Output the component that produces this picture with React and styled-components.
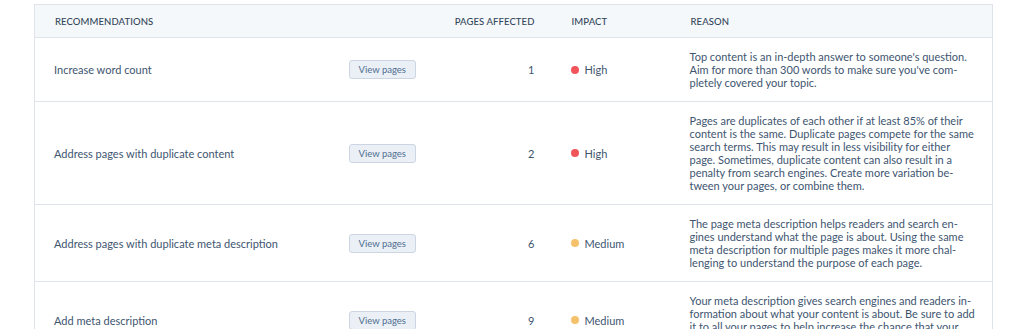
import React from 'react';
import styled, { createGlobalStyle } from 'styled-components';

const GlobalStyle = createGlobalStyle`
  body {
    margin: 0;
    background: #fff;
    font-family: Lato, "Open Sans", sans-serif;
    color: #33475b;
  }
`;

const Page = styled.div`
  padding: 4px 25px 0 34px;
`;

const Table = styled.table`
  width: 959px;
  border-collapse: collapse;
  table-layout: fixed;
  border: 1px solid #dfe3eb;
`;

const HeadCell = styled.th`
  height: 32px;
  padding: 0 ${p => (p.$right ? '17px' : '0')} 0 ${p => (p.$right ? '0' : '20px')};
  background: #f5f8fa;
  border-bottom: 1px solid #dfe3eb;
  font-size: 9.5px;
  font-weight: 500;
  text-transform: uppercase;
  text-align: ${p => (p.$right ? 'right' : 'left')};
  color: #33475b;
  letter-spacing: 0.1px;
`;

const Row = styled.tr`
  border-bottom: 1px solid #dfe3eb;
`;

const Cell = styled.td`
  padding: 12px ${p => (p.$right ? '17px' : '20px')} 12px ${p => (p.$right ? '0' : '19px')};
  vertical-align: middle;
  font-size: 11px;
  line-height: 13px;
  text-align: ${p => (p.$right ? 'right' : 'left')};
  color: #3e5570;
`;

const Reason = styled(Cell)`
  padding-right: 10px;
  white-space: nowrap;
`;

const ViewButton = styled.button`
  height: 19px;
  padding: 0 9px;
  background: #eaf0f6;
  border: 1px solid #cbd6e2;
  border-radius: 3px;
  color: #506e91;
  font-family: inherit;
  font-size: 9.5px;
  cursor: pointer;
`;

const Impact = styled.span`
  display: inline-flex;
  align-items: center;
  gap: 6px;
`;

const Dot = styled.span`
  width: 8px;
  height: 8px;
  border-radius: 50%;
  background: ${p => (p.$level === 'High' ? '#f2545b' : '#f5c26b')};
`;

const rows = [
  {
    name: 'Increase word count',
    count: 1,
    impact: 'High',
    reason: [
      "Top content is an in-depth answer to someone's question.",
      "Aim for more than 300 words to make sure you've com-",
      'pletely covered your topic.',
    ],
  },
  {
    name: 'Address pages with duplicate content',
    count: 2,
    impact: 'High',
    reason: [
      'Pages are duplicates of each other if at least 85% of their',
      'content is the same. Duplicate pages compete for the same',
      'search terms. This may result in less visibility for either',
      'page. Sometimes, duplicate content can also result in a',
      'penalty from search engines. Create more variation be-',
      'tween your pages, or combine them.',
    ],
  },
  {
    name: 'Address pages with duplicate meta description',
    count: 6,
    impact: 'Medium',
    reason: [
      'The page meta description helps readers and search en-',
      'gines understand what the page is about. Using the same',
      'meta description for multiple pages makes it more chal-',
      'lenging to understand the purpose of each page.',
    ],
  },
  {
    name: 'Add meta description',
    count: 9,
    impact: 'Medium',
    reason: [
      'Your meta description gives search engines and readers in-',
      'formation about what your content is about. Be sure to add',
      'it to all your pages to help increase the chance that your',
      'content shows up in search results.',
    ],
  },
];

export default function App() {
  return (
    <Page>
      <GlobalStyle />
      <Table>
        <colgroup>
          <col style={{ width: 295 }} />
          <col style={{ width: 109 }} />
          <col style={{ width: 113 }} />
          <col style={{ width: 119 }} />
          <col />
        </colgroup>
        <thead>
          <tr>
            <HeadCell>Recommendations</HeadCell>
            <HeadCell />
            <HeadCell $right>Pages affected</HeadCell>
            <HeadCell>Impact</HeadCell>
            <HeadCell>Reason</HeadCell>
          </tr>
        </thead>
        <tbody>
          {rows.map(r => (
            <Row key={r.name}>
              <Cell>{r.name}</Cell>
              <Cell>
                <ViewButton>View pages</ViewButton>
              </Cell>
              <Cell $right>{r.count}</Cell>
              <Cell>
                <Impact>
                  <Dot $level={r.impact} />
                  {r.impact}
                </Impact>
              </Cell>
              <Reason>
                {r.reason.map((line, i) => (
                  <React.Fragment key={i}>
                    {i > 0 && <br />}
                    {line}
                  </React.Fragment>
                ))}
              </Reason>
            </Row>
          ))}
        </tbody>
      </Table>
    </Page>
  );
}
